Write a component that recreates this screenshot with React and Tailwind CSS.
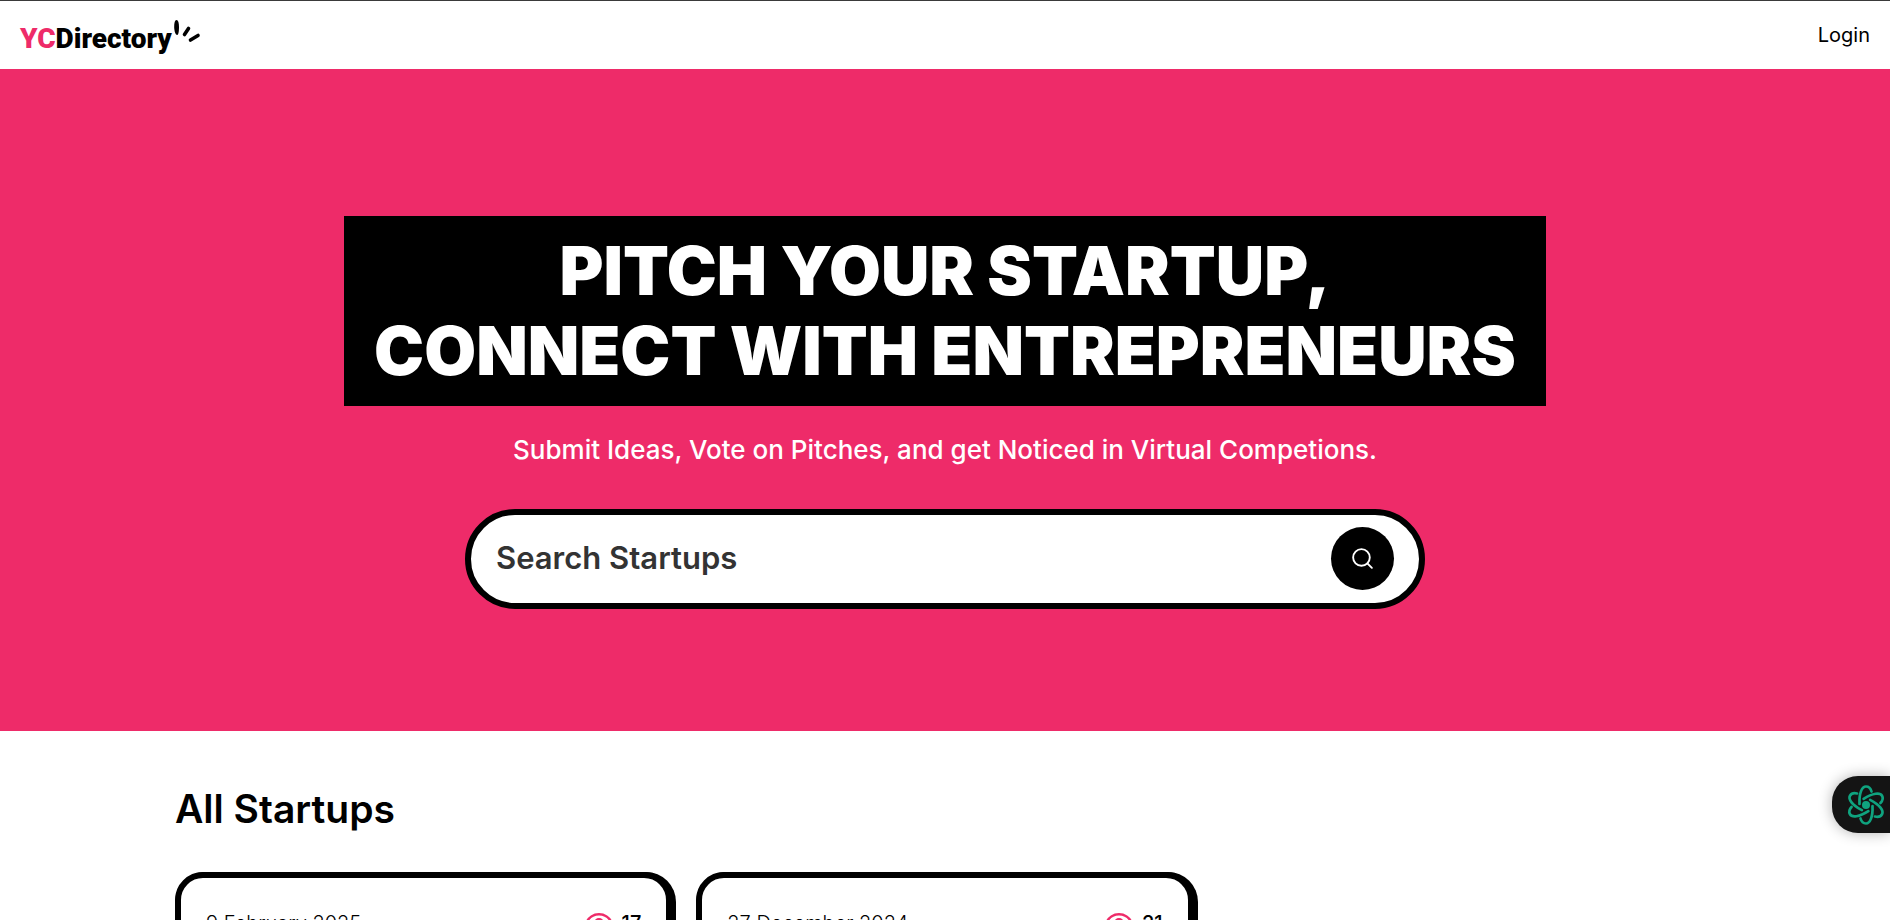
import React, { useState } from "react";
import { Eye, Search } from "lucide-react";

const startups = [
  { id: 1, date: "9 February 2025", views: 17 },
  { id: 2, date: "27 December 2024", views: 21 },
];

const petals = [0, 60, 120, 180, 240, 300];

const Logo = () => (
  <a href="/" className="flex h-[38px] items-start" aria-label="YCDirectory">
    <span className="mt-[7px] font-[Roboto,sans-serif] text-[28px] leading-[32px] font-black text-black">
      <span className="text-[#ee2b69]">YC</span>Directory
    </span>
    <svg width="30" height="28" viewBox="0 0 30 28" aria-hidden="true">
      <path
        d="M4.500 4C6.200 4 7 7 7 11.500C7 15.500 6.300 19 5.200 19C3.600 19 2.300 15.500 2.200 11.500C2.100 7 2.800 4 4.500 4Z"
        fill="#000"
      />
      <path
        d="M16.500 12.500L12.500 18.500M26 19.500L18.500 24"
        stroke="#000"
        strokeWidth="3.600"
        strokeLinecap="round"
      />
    </svg>
  </a>
);

const Navbar = () => (
  <header className="border-t border-[#3a3a3a] bg-white px-5 py-[15px]">
    <nav className="flex items-center justify-between">
      <Logo />
      <a href="/login" className="text-[20px] leading-[38px] text-black">
        Login
      </a>
    </nav>
  </header>
);

const SearchForm = () => {
  const [query, setQuery] = useState("");

  return (
    <form
      onSubmit={(e) => e.preventDefault()}
      className="mt-10 flex h-[100px] w-full max-w-[960px] items-center rounded-full border-[6px] border-black bg-white px-[25px]"
    >
      <input
        type="text"
        aria-label="Search Startups"
        placeholder="Search Startups"
        value={query}
        onChange={(e) => setQuery(e.target.value)}
        className="min-w-0 flex-1 text-[31px] font-semibold text-black outline-none placeholder:text-[#333333]"
      />
      <button
        type="submit"
        aria-label="Search"
        className="flex size-[63px] items-center justify-center rounded-full bg-black text-white"
      >
        <Search size={25} strokeWidth={1.8} />
      </button>
    </form>
  );
};

const StartupCard = ({ startup }) => (
  <li className="h-[400px] rounded-[28px] border-[6px] border-black bg-white px-[25px] py-[30px] shadow-[2px_2px_0_2px_#000]">
    <div className="flex h-[30px] items-center justify-between">
      <p className="text-[20px] leading-[32px] font-light">{startup.date}</p>
      <div className="flex items-center gap-2">
        <Eye size={30} className="text-[#ee2b69]" />
        <span className="text-[20px] leading-[32px] font-medium">{startup.views}</span>
      </div>
    </div>
  </li>
);

const App = () => {
  return (
    <main className="h-screen overflow-hidden bg-white font-[Inter,sans-serif] text-black">
      <Navbar />
      <section className="flex min-h-[662px] flex-col items-center justify-center bg-[#ee2b69] px-[30px] pt-[74px] pb-[50px]">
        <h1 className="bg-black px-[30px] py-[15px] text-center text-[67px] leading-[80px] font-black text-white uppercase">
          Pitch Your Startup, <br />
          Connect With Entrepreneurs
        </h1>
        <p className="mt-[25px] text-center text-[26px] leading-[38px] font-medium text-white">
          Submit Ideas, Vote on Pitches, and get Noticed in Virtual Competions.
        </p>
        <SearchForm />
      </section>

      <section className="mx-auto max-w-[1600px] px-[30px] py-[50px]">
        <h2 className="text-[39px] leading-[56px] font-semibold">All Startups</h2>
        <ul className="mt-[35px] grid grid-cols-3 gap-6">
          {startups.map((startup) => (
            <StartupCard key={startup.id} startup={startup} />
          ))}
        </ul>
      </section>

      <button
        type="button"
        aria-label="Open assistant"
        className="fixed top-[776px] right-0 flex h-[57px] w-[58px] items-center justify-end rounded-l-[26px] bg-[#141414] pr-1 shadow-[0_0_14px_rgba(0,0,0,0.3)]"
      >
        <svg width="40" height="42" viewBox="-20 -21 40 42" fill="none" aria-hidden="true">
          <g stroke="#0fa37f" strokeWidth="2.700" strokeLinecap="round">
            {petals.map((angle) => (
              <path
                key={angle}
                d="M-6.500 -1C-7 -12 -4 -18.500 0 -18.500C3 -18.500 4.500 -17 5.500 -13.500"
                transform={`rotate(${angle})`}
              />
            ))}
          </g>
          <circle r="4" fill="#0fa37f" />
        </svg>
      </button>
    </main>
  );
};

export default App;
